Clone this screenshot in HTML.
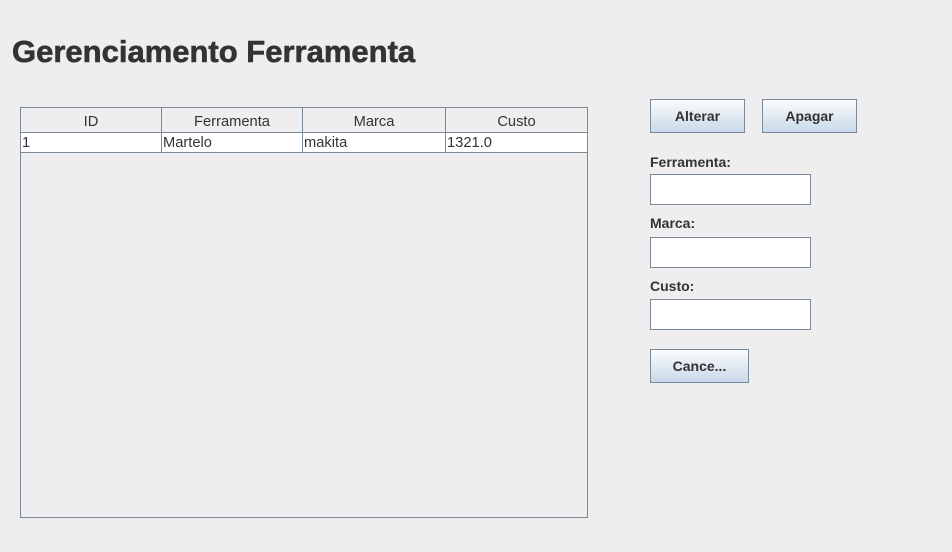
<!DOCTYPE html><html><head><style>
body{margin:0;width:952px;height:552px;background:#eeeeee;font-family:"Liberation Sans",sans-serif;position:relative;overflow:hidden;color:#333}
.a{position:absolute}
h1{position:absolute;left:12px;top:34px;margin:0;font-size:31px;font-weight:bold;color:#333;-webkit-text-stroke:0.6px #333}
.tbl{left:20px;top:107px;width:566px;height:409px;border:1px solid #7a8a99;background:#eeeeee}
.hd{position:absolute;top:0;height:25px;border-right:1px solid #7a8a99;border-bottom:1px solid #7a8a99;font-size:14.7px;text-align:center;line-height:28px;box-sizing:border-box}
.cl{position:absolute;top:25px;height:20px;background:#fff;border-right:1px solid #7a8a99;border-bottom:1px solid #7a8a99;font-size:14.7px;line-height:20px;padding-left:1px;box-sizing:border-box}
.btn{position:absolute;border:1px solid #7a8a99;background:linear-gradient(#fbfcfd,#c9d9ea);font-weight:bold;font-size:14px;text-align:center;box-sizing:border-box;line-height:33px}
.lbl{position:absolute;left:650px;font-weight:bold;font-size:14px}
.fld{position:absolute;left:650px;width:161px;height:31px;background:#fff;border:1px solid #7a8a99;box-sizing:border-box}
</style></head><body>
<h1>Gerenciamento Ferramenta</h1>
<div class="a tbl">
<div class="hd" style="left:0;width:141px">ID</div>
<div class="hd" style="left:141px;width:141px">Ferramenta</div>
<div class="hd" style="left:282px;width:143px">Marca</div>
<div class="hd" style="left:425px;width:141px;border-right:none">Custo</div>
<div class="cl" style="left:0;width:141px">1</div>
<div class="cl" style="left:141px;width:141px">Martelo</div>
<div class="cl" style="left:282px;width:143px">makita</div>
<div class="cl" style="left:425px;width:141px;border-right:none">1321.0</div>
</div>
<div class="btn" style="left:650px;top:99px;width:95px;height:34px">Alterar</div>
<div class="btn" style="left:762px;top:99px;width:95px;height:34px">Apagar</div>
<div class="lbl" style="top:154px">Ferramenta:</div>
<div class="fld" style="top:174px"></div>
<div class="lbl" style="top:215px">Marca:</div>
<div class="fld" style="top:237px"></div>
<div class="lbl" style="top:278px">Custo:</div>
<div class="fld" style="top:299px"></div>
<div class="btn" style="left:650px;top:349px;width:99px;height:34px">Cance...</div>
</body></html>
